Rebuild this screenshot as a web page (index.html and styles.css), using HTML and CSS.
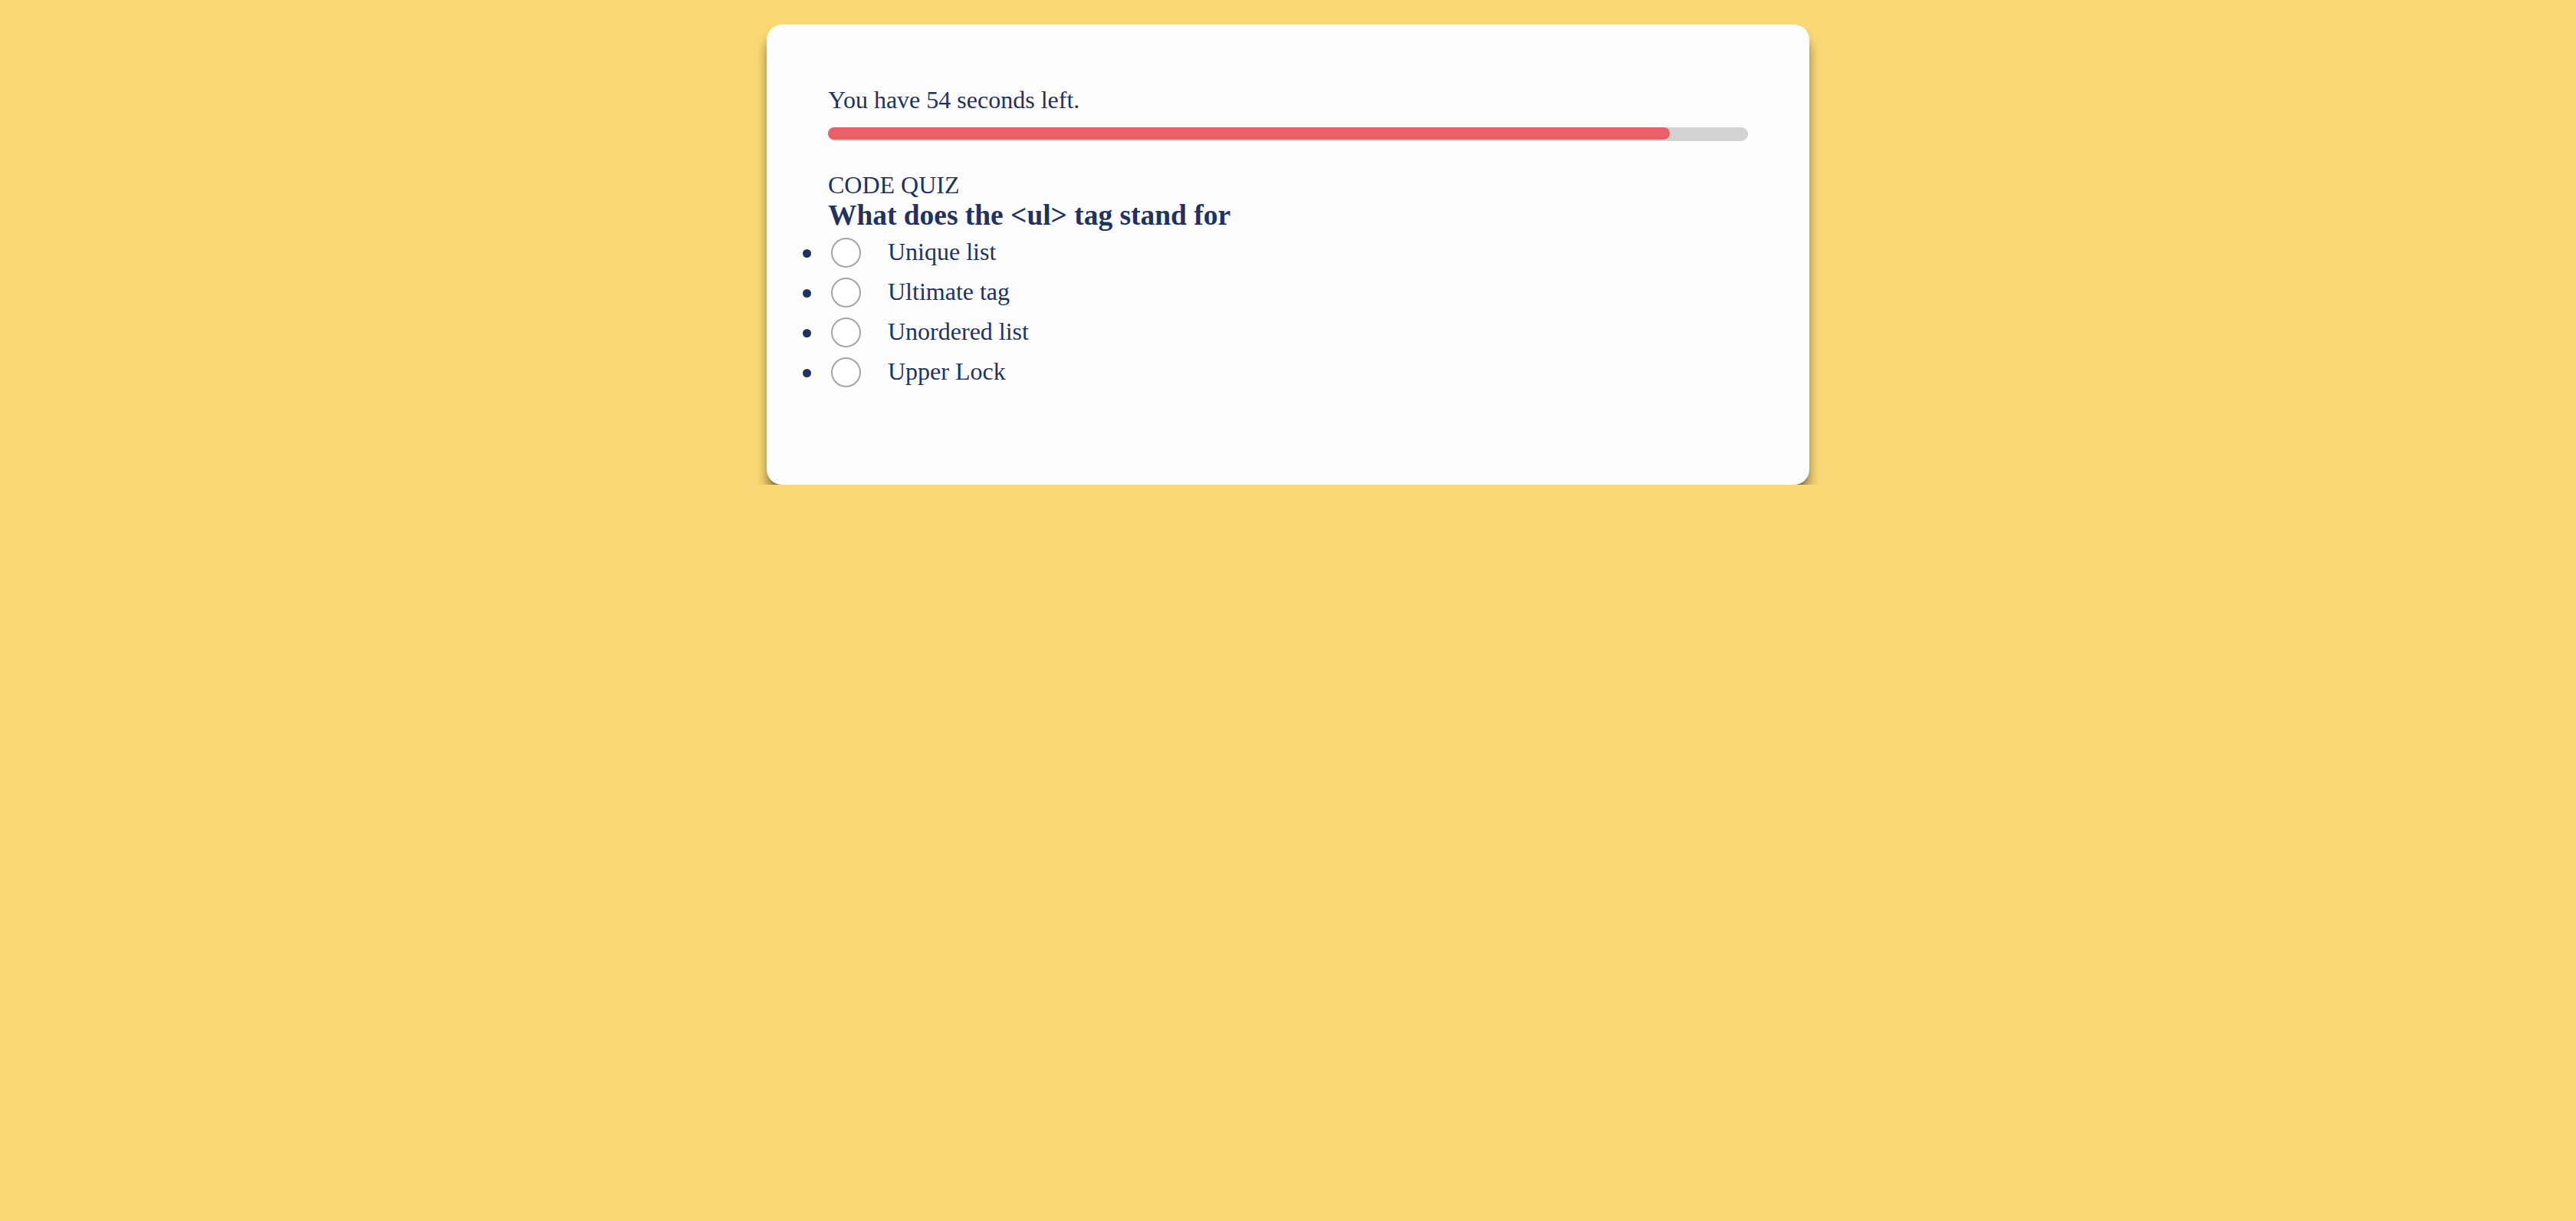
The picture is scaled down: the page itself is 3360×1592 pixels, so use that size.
FILE: index.html
```html
<!DOCTYPE html>
<html lang="en">
<head>
<meta charset="utf-8">
<title>Code Quiz</title>
<link rel="stylesheet" href="styles.css">
</head>
<body>
<main class="card">
  <div class="timer">You have 54 seconds left.</div>
  <div class="bar"><div class="bar-fill" style="width: 91.5%"></div></div>
  <div class="title">CODE QUIZ</div>
  <h3 class="question">What does the &lt;ul&gt; tag stand for</h3>
  <ul class="answers">
    <li><label><input type="radio" name="q" class="radio"><span>Unique list</span></label></li>
    <li><label><input type="radio" name="q" class="radio"><span>Ultimate tag</span></label></li>
    <li><label><input type="radio" name="q" class="radio"><span>Unordered list</span></label></li>
    <li><label><input type="radio" name="q" class="radio"><span>Upper Lock</span></label></li>
  </ul>
</main>
</body>
</html>
```
FILE: styles.css
```css
html, body {
  margin: 0;
  padding: 0;
}

body {
  background: #fad975;
  font-family: "Liberation Serif", "Times New Roman", serif;
  color: #1f3260;
  font-size: 32px;
}

.card {
  box-sizing: border-box;
  width: 1360px;
  margin: 32px auto 0;
  padding: 80px;
  background: #fdfdfd;
  border-radius: 20px;
  box-shadow: 0 14px 18px -4px rgba(0, 0, 0, 0.7);
}

.timer {
  line-height: 36px;
}

.bar {
  margin-top: 18px;
  height: 18px;
  background: #d3d3d3;
  border-radius: 9px;
}

.bar-fill {
  height: 16px;
  background: #eb5f69;
  border-radius: 8px;
}

.title {
  margin-top: 38px;
  line-height: 38px;
}

.question {
  margin: 0;
  font-size: 37.44px;
  font-weight: bold;
  line-height: 42px;
}

.answers {
  margin: 0 0 42px;
  padding-left: 0;
  list-style: none;
}

.answers li {
  line-height: 52px;
}

.answers li::before {
  content: "";
  display: inline-block;
  width: 11px;
  height: 11px;
  margin: 0 22px 0 -33px;
  border-radius: 50%;
  background: currentColor;
  vertical-align: middle;
  position: relative;
  top: -1px;
}

.radio {
  -webkit-appearance: none;
  appearance: none;
  box-sizing: border-box;
  width: 39px;
  height: 39px;
  margin: 0 35px 0 4px;
  border: 2px solid #a4a4a9;
  border-radius: 50%;
  background: #ffffff;
  vertical-align: middle;
  position: relative;
  top: -2px;
}
```
